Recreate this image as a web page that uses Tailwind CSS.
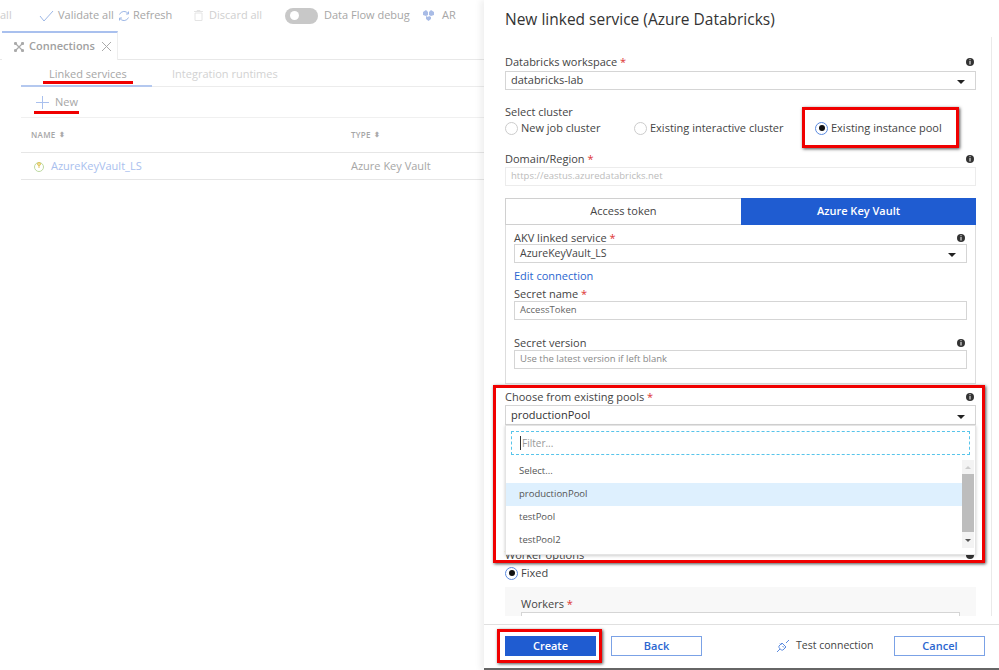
<!DOCTYPE html>
<html lang="en">
<head>
  <meta charset="UTF-8" />
  <title>New linked service</title>
  <script src="https://cdn.jsdelivr.net/npm/@tailwindcss/browser@4"></script>
</head>
<body class="w-[999px] h-[670px] overflow-hidden bg-white text-[11px] text-[#444] font-['Open_Sans',sans-serif] flex relative">

  <!-- Left: faded factory view -->
  <section class="w-[484px] h-full shrink-0 flex flex-col text-[#a6a6a6] overflow-hidden">
    <div class="h-[31px] flex items-center text-[11px] whitespace-nowrap shrink-0">
      <span class="w-[39px] text-[#ccc]">all</span>
      <svg class="w-[15px] h-[12px] mr-[4px]" viewBox="0 0 15 12" fill="none" stroke="#9db7e6" stroke-width="1"><path d="M1 6l4 5L14 1"/></svg>
      <span class="w-[61px]">Validate all</span>
      <svg class="w-[12px] h-[12px] mr-[3px] ml-[-1px]" viewBox="0 0 12 12" fill="none" stroke="#9db7e6" stroke-width="1"><path d="M1.5 4.5A5 5 0 0 1 10.5 4M10.5 7.5A5 5 0 0 1 1.500 8M10.500 1.500V4H8M1.500 10.500V8H4"/></svg>
      <span class="w-[61px]">Refresh</span>
      <svg class="w-[9px] h-[11px] mr-[6px]" viewBox="0 0 9 11" fill="none" stroke="#e4e4e4"><path d="M1 3h7v7.500H1zM0 1.500h9M3 1V.5h3V1"/></svg>
      <span class="w-[76px] text-[#cfcfcf]">Discard all</span>
      <span class="w-[33px] h-[16px] rounded-full bg-[#c8c8c8] flex items-center pl-[5px] mr-[6px]"><span class="w-[9px] h-[9px] rounded-full bg-white"></span></span>
      <span class="w-[88px]">Data Flow debug</span>
      <svg class="w-[11px] h-[11px] mx-[8px] ml-[11px]" viewBox="0 0 11 11" fill="#a9bce6"><path d="M0 2l3-2 2 2v3L3 6 0 5zM6 2l2-2 3 2v3L8 6 6 5zM3 6l2 1 1-1 2 1v2l-2.500 2L3 9z"/></svg>
      <span>AR</span>
    </div>

    <div class="flex border-b border-[#e8e8e8] h-[29px] shrink-0">
      <div class="ml-[2px] w-[116px] h-[29px] border-t-2 border-[#a9c0ee] border-r border-r-[#eee] flex items-center pl-[12px] gap-[5px] bg-white text-[#999]">
        <svg class="w-[10px] h-[10px]" viewBox="0 0 10 10" fill="none" stroke="#aaa" stroke-width="1.200"><path d="M1 1l8 8M9 1L1 9"/><circle cx="1.500" cy="1.500" r="1"/><circle cx="8.500" cy="1.500" r="1"/><circle cx="1.500" cy="8.500" r="1"/><circle cx="8.500" cy="8.500" r="1"/></svg>
        <span class="font-semibold text-[#a0a0a0]">Connections</span>
        <svg class="w-[9px] h-[9px] ml-[2px]" viewBox="0 0 9 9" fill="none" stroke="#aaa"><path d="M0 0l9 9M9 0L0 9"/></svg>
      </div>
    </div>

    <div class="h-[27px] shrink-0 border-b border-[#ececec] ml-[21px] flex relative">
      <div class="w-[131px] h-[27px] border-b-2 border-[#b4c8ef] pl-[28px] pt-[6px] whitespace-nowrap relative">
        Linked services
        <span class="absolute left-[22px] top-[21px] w-[90px] h-[3px] bg-[#f00000]"></span>
      </div>
      <div class="pl-[20px] pt-[6px] text-[#d2d2d2] whitespace-nowrap">Integration runtimes</div>
    </div>

    <div class="h-[31px] shrink-0 border-b border-[#f0f0f0] ml-[21px] flex items-center pl-[15px] gap-[6px] relative">
      <svg class="w-[13px] h-[13px]" viewBox="0 0 13 13" stroke="#a9c0ee" stroke-width="1"><path d="M6.500 0v13M0 6.500h13"/></svg>
      <span>New</span>
      <span class="absolute left-[13px] top-[24px] w-[45px] h-[3px] bg-[#f00000]"></span>
    </div>

    <div class="h-[35px] shrink-0 border-b border-[#e6e6e6] ml-[21px] flex items-center text-[8px] font-semibold tracking-[0.3px]">
      <span class="w-[330px] pl-[10px] flex items-center gap-[3px]">NAME <span class="text-[7px] text-[#aaa]">⬍</span></span>
      <span class="flex items-center gap-[3px]">TYPE <span class="text-[7px] text-[#aaa]">⬍</span></span>
    </div>

    <div class="h-[27px] shrink-0 border-b border-[#e6e6e6] ml-[21px] flex items-center">
      <span class="w-[330px] pl-[13px] flex items-center gap-[7px]">
        <svg class="w-[10px] h-[11px]" viewBox="0 0 10 11" fill="none" stroke-width="1"><circle cx="5" cy="6" r="4.500" stroke="#bcd9a0"/><path d="M5 1v6" stroke="#e2c65c"/><circle cx="5" cy="3" r="1.500" stroke="#e2c65c"/></svg>
        <span class="text-[#a9c0ee]">AzureKeyVault_LS</span>
      </span>
      <span>Azure Key Vault</span>
    </div>
  </section>

  <!-- Right: linked service panel -->
  <section class="flex-1 h-full flex flex-col shadow-[-4px_0_6px_rgba(0,0,0,0.06)] bg-white relative">
    <h1 class="h-[37px] shrink-0 pl-[21px] pt-[8px] text-[15.500px] leading-[22px] text-[#333] whitespace-nowrap">New linked service (Azure Databricks)</h1>

    <div class="h-[579px] shrink-0 w-[508px] border-r border-[#eaeaea] overflow-hidden pl-[21px]">
      <div class="w-[471px]">
        <div class="flex justify-between items-center h-[18px] mt-[16px]">
          <span>Databricks workspace <span class="text-[#d33]">*</span></span>
          <svg class="w-[8px] h-[8px] mr-[2px]" viewBox="0 0 8 8"><circle cx="4" cy="4" r="4" fill="#333"/><path d="M4 3v3.500M4 1.200v1" stroke="#fff"/></svg>
        </div>
        <div class="h-[19px] border border-[#d5d5d5] flex items-center justify-between pl-[5px] pr-[10px]">
          <span>databricks-lab</span>
          <span class="w-0 h-0 mt-[3px] border-x-[4px] border-x-transparent border-t-[4px] border-t-[#222]"></span>
        </div>

        <div class="h-[15px] mt-[14px] leading-[15px]">Select cluster</div>
        <div class="h-[18px] flex items-center whitespace-nowrap">
          <span class="w-[13px] h-[13px] rounded-full border border-[#ccc] mr-[3px]"></span>
          <span class="w-[113px]">New job cluster</span>
          <span class="w-[13px] h-[13px] rounded-full border border-[#ccc] mr-[3px]"></span>
          <span class="w-[165px]">Existing interactive cluster</span>
          <span class="w-[13px] h-[13px] rounded-full border border-[#5b8be0] mr-[3px] flex items-center justify-center"><span class="w-[6px] h-[6px] rounded-full bg-[#111]"></span></span>
          <span>Existing instance pool</span>
        </div>

        <div class="flex justify-between items-center h-[16px] mt-[14px]">
          <span>Domain/Region <span class="text-[#d33]">*</span></span>
          <svg class="w-[8px] h-[8px] mr-[2px]" viewBox="0 0 8 8"><circle cx="4" cy="4" r="4" fill="#333"/><path d="M4 3v3.500M4 1.200v1" stroke="#fff"/></svg>
        </div>
        <div class="h-[19px] border border-[#ececec] flex items-center pl-[5px] text-[9.500px] text-[#bbb]">https://eastus.azuredatabricks.net</div>

        <div class="mt-[12px] border border-[#ddd] h-[186px]">
          <div class="flex h-[27px] -mt-px -mx-px">
            <div class="w-[236px] border border-[#d0d0d0] border-r-0 flex items-center justify-center">Access token</div>
            <div class="flex-1 bg-[#1f5cd1] text-white font-semibold flex items-center justify-center">Azure Key Vault</div>
          </div>
          <div class="pl-[8px] pr-[8px]">
            <div class="flex justify-between items-center h-[14px] mt-[6px]">
              <span>AKV linked service <span class="text-[#d33]">*</span></span>
              <svg class="w-[8px] h-[8px] mr-[2px]" viewBox="0 0 8 8"><circle cx="4" cy="4" r="4" fill="#333"/><path d="M4 3v3.500M4 1.200v1" stroke="#fff"/></svg>
            </div>
            <div class="h-[19px] mt-[-1px] border border-[#d5d5d5] flex items-center justify-between pl-[5px] pr-[10px]">
              <span class="text-[10.500px]">AzureKeyVault_LS</span>
              <span class="w-0 h-0 mt-[3px] border-x-[4px] border-x-transparent border-t-[4px] border-t-[#222]"></span>
            </div>
            <div class="h-[14px] mt-[6px] leading-[14px] text-[#2b66d0]">Edit connection</div>
            <div class="h-[14px] mt-[4px] leading-[14px]">Secret name <span class="text-[#d33]">*</span></div>
            <div class="h-[19px] border border-[#d5d5d5] flex items-center pl-[5px] text-[9.500px] text-[#666]">AccessToken</div>
            <div class="flex justify-between items-center h-[14px] mt-[16px]">
              <span>Secret version</span>
              <svg class="w-[8px] h-[8px] mr-[2px]" viewBox="0 0 8 8"><circle cx="4" cy="4" r="4" fill="#333"/><path d="M4 3v3.500M4 1.200v1" stroke="#fff"/></svg>
            </div>
            <div class="h-[19px] border border-[#d5d5d5] flex items-center pl-[5px] text-[9.500px] text-[#888]">Use the latest version if left blank</div>
          </div>
        </div>

        <div class="flex justify-between items-center h-[14px] mt-[6px]">
          <span>Choose from existing pools <span class="text-[#d33]">*</span></span>
          <svg class="w-[8px] h-[8px] mr-[2px]" viewBox="0 0 8 8"><circle cx="4" cy="4" r="4" fill="#333"/><path d="M4 3v3.500M4 1.200v1" stroke="#fff"/></svg>
        </div>
        <div class="h-[20px] mt-[1px] border border-[#d5d5d5] flex items-center justify-between pl-[5px] pr-[10px] relative">
          <span class="text-[#333]">productionPool</span>
          <span class="w-0 h-0 mt-[3px] border-x-[4px] border-x-transparent border-t-[4px] border-t-[#222]"></span>

          <!-- open dropdown -->
          <div class="absolute left-[-1px] top-[19px] w-[471px] h-[130px] bg-white border border-[#e4e4e4] shadow-[0_1px_3px_rgba(0,0,0,0.2)] z-10 flex flex-col">
            <div class="mx-[5px] mt-[5px] h-[24px] border border-dashed border-[#57c4ea] flex items-center pl-[8px] text-[10px] text-[#999]"><span class="w-px h-[14px] bg-[#333] mr-px"></span>Filter...</div>
            <div class="flex mt-[5px]">
              <div class="flex-1 text-[9.500px] text-[#555]">
                <div class="h-[23px] pl-[13px] flex items-center">Select...</div>
                <div class="h-[23px] pl-[13px] flex items-center bg-[#def0fe]">productionPool</div>
                <div class="h-[23px] pl-[13px] flex items-center">testPool</div>
                <div class="h-[23px] pl-[13px] flex items-center">testPool2</div>
              </div>
              <div class="w-[12px] h-[88px] mr-[1px] bg-[#f3f3f3] flex flex-col items-center">
                <span class="h-[14px] flex items-center"><span class="w-0 h-0 border-x-[3px] border-x-transparent border-b-[3px] border-b-[#ccc]"></span></span>
                <span class="w-full h-[58px] bg-[#bdbdbd]"></span>
                <span class="h-[16px] flex items-center"><span class="w-0 h-0 border-x-[3px] border-x-transparent border-t-[3px] border-t-[#555]"></span></span>
              </div>
            </div>
          </div>
        </div>

        <div class="flex justify-between items-center h-[14px] mt-[123px]">
          <span>Worker options</span>
          <svg class="w-[8px] h-[8px] mr-[2px]" viewBox="0 0 8 8"><circle cx="4" cy="4" r="4" fill="#333"/></svg>
        </div>
        <div class="h-[18px] mt-[2px] flex items-center">
          <span class="w-[13px] h-[13px] rounded-full border border-[#5b8be0] mr-[3px] flex items-center justify-center"><span class="w-[6px] h-[6px] rounded-full bg-[#111]"></span></span>
          <span>Fixed</span>
        </div>
        <div class="mt-[5px] h-[60px] bg-[#f8f8f8] pl-[16px] pr-[16px]">
          <div class="pt-[10px] h-[25px] leading-[14px]">Workers <span class="text-[#d33]">*</span></div>
          <div class="h-[20px] border border-[#d5d5d5] bg-white"></div>
        </div>
      </div>
    </div>

    <footer class="mt-[8px] flex-1 border-t border-[#e0e0e0] border-b-2 border-b-[#666] flex items-center pl-[21px] pb-[1px]">
      <button class="w-[91px] h-[20px] bg-[#1f5cd1] text-white font-semibold">Create</button>
      <button class="w-[91px] h-[20px] ml-[15px] border border-[#7ba2e6] text-[#2b66d0] font-semibold">Back</button>
      <svg class="w-[12px] h-[12px] ml-[75px] mr-[7px]" viewBox="0 0 12 12" fill="none" stroke="#5b8be0"><path d="M0 12l3-3M9 3l3-3M5 3L2 6c-1 1.500 2.500 5 4 4l3-3zM4.500 5L3 3.500M7 7.500L5.500 6"/></svg>
      <span class="text-[10.500px] whitespace-nowrap">Test connection</span>
      <button class="w-[91px] h-[20px] ml-[21px] border border-[#7ba2e6] text-[#2b66d0] font-semibold">Cancel</button>
    </footer>
  </section>

  <!-- Red annotation boxes drawn over the screenshot -->
  <div class="absolute left-[802px] top-[107px] w-[157px] h-[41px] border-[3px] border-[#f00000] shadow-[1px_1px_3px_rgba(0,0,0,0.7)] z-20"></div>
  <div class="absolute left-[493px] top-[385px] w-[492px] h-[178px] border-[3px] border-[#f00000] shadow-[1px_1px_3px_rgba(0,0,0,0.7)] z-20"></div>
  <div class="absolute left-[497px] top-[629px] w-[105px] h-[34px] border-[3px] border-[#f00000] shadow-[1px_1px_3px_rgba(0,0,0,0.7)] z-20"></div>
</body>
</html>
